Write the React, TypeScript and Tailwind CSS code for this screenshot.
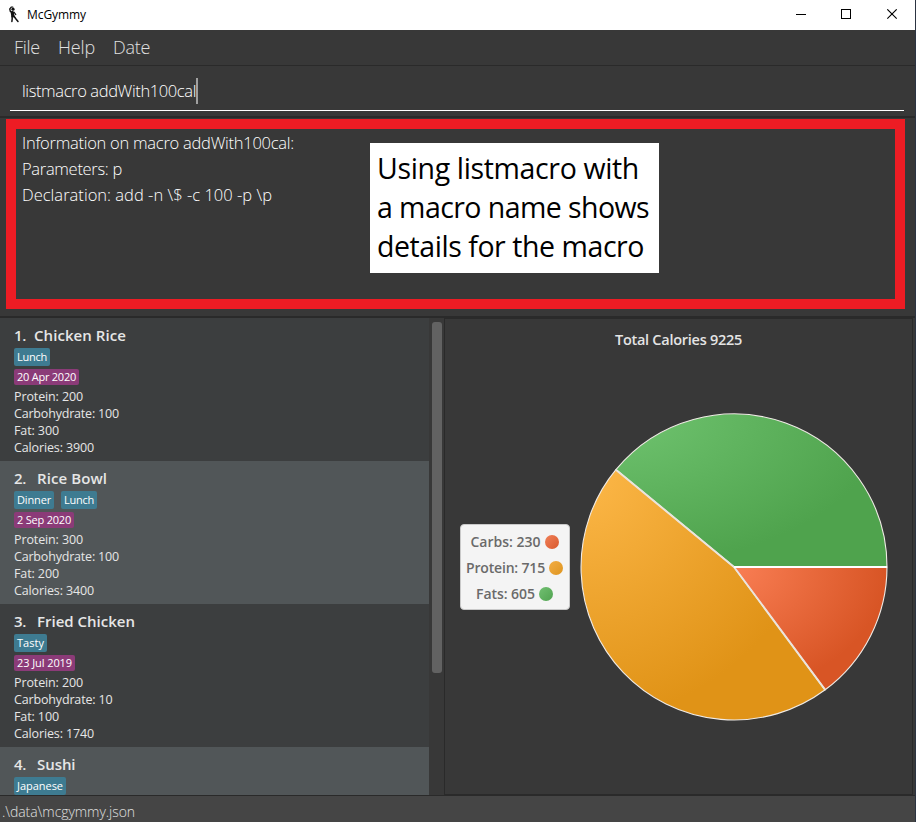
import { useLayoutEffect, useRef } from "react";

/** One line of text whose letter spacing is adjusted so that it fills `w` pixels. */
function Fit({ w, className = "", children }: { w: number; className?: string; children: string }) {
  const ref = useRef<HTMLSpanElement>(null);
  useLayoutEffect(() => {
    const el = ref.current;
    if (!el) return;
    el.style.letterSpacing = "0px";
    const natural = el.getBoundingClientRect().width;
    el.style.letterSpacing = `${(w - natural) / children.length}px`;
  }, [w, children]);
  return (
    <span ref={ref} className={`inline-block whitespace-pre ${className}`}>
      {children}
    </span>
  );
}

type Tag = { label: string; w: number };
type Food = {
  n: string;
  nw: number;
  name: string;
  w: number;
  tags: Tag[];
  date?: Tag;
  facts: Tag[];
};

const foods: Food[] = [
  {
    n: "1.", nw: 20, name: "Chicken Rice", w: 92,
    tags: [{ label: "Lunch", w: 30 }],
    date: { label: "20 Apr 2020", w: 59 },
    facts: [
      { label: "Protein: 200", w: 69 },
      { label: "Carbohydrate: 100", w: 105 },
      { label: "Fat: 300", w: 45 },
      { label: "Calories: 3900", w: 80 },
    ],
  },
  {
    n: "2.", nw: 23, name: "Rice Bowl", w: 70,
    tags: [{ label: "Dinner", w: 34 }, { label: "Lunch", w: 30 }],
    date: { label: "2 Sep 2020", w: 54 },
    facts: [
      { label: "Protein: 300", w: 69 },
      { label: "Carbohydrate: 100", w: 105 },
      { label: "Fat: 200", w: 45 },
      { label: "Calories: 3400", w: 80 },
    ],
  },
  {
    n: "3.", nw: 23, name: "Fried Chicken", w: 98,
    tags: [{ label: "Tasty", w: 27 }],
    date: { label: "23 Jul 2019", w: 55 },
    facts: [
      { label: "Protein: 200", w: 69 },
      { label: "Carbohydrate: 10", w: 98.5 },
      { label: "Fat: 100", w: 45 },
      { label: "Calories: 1740", w: 80 },
    ],
  },
  {
    n: "4.", nw: 23, name: "Sushi", w: 38.5,
    tags: [{ label: "Japanese", w: 46 }],
    facts: [],
  },
];

function FoodCard({ food, alt }: { food: Food; alt: boolean }) {
  return (
    <div className={`h-[143px] shrink-0 pl-3.5 pt-[7px] text-[#e6e6e6] ${alt ? "bg-[#515658]" : "bg-[#3c3e3f]"}`}>
      <div className="flex h-[21px] text-[15px] leading-[21px] font-semibold">
        <div className="shrink-0" style={{ width: food.nw }}>
          <Fit w={12}>{food.n}</Fit>
        </div>
        <Fit w={food.w}>{food.name}</Fit>
      </div>
      <div className="mt-0.5 flex gap-[7px]">
        {food.tags.map((t) => (
          <div key={t.label} className="h-[18px] rounded-[2px] bg-[#3e7b91] px-[3px] text-[11px] leading-[18px] text-white">
            <Fit w={t.w}>{t.label}</Fit>
          </div>
        ))}
      </div>
      {food.date && (
        <div className="mt-[3px] h-4 w-fit rounded-[2px] bg-[#8b3b78] px-[3px] text-[11px] leading-4 text-white">
          <Fit w={food.date.w} className="h-4">{food.date.label}</Fit>
        </div>
      )}
      <div className="mt-[3px] flex flex-col text-[12.5px] leading-[17px]">
        {food.facts.map((f) => (
          <div key={f.label} className="h-[17px]">
            <Fit w={f.w}>{f.label}</Fit>
          </div>
        ))}
      </div>
    </div>
  );
}

const legend = [
  { label: "Carbs: 230", w: 70, dot: "bg-linear-to-br from-[#f08058] to-[#d9582b]" },
  { label: "Protein: 715", w: 79, dot: "bg-linear-to-br from-[#f3ad43] to-[#de951d]" },
  { label: "Fats: 605", w: 59, dot: "bg-linear-to-br from-[#72c072] to-[#50a350]" },
];

function Pie() {
  return (
    <svg width="308" height="308" viewBox="-154 -154 308 308" stroke="#f0ebe6" strokeLinejoin="round">
      <defs>
        <radialGradient id="fats" cx="0" cy="0" r="1">
          <stop offset="0" stopColor="#70c470" />
          <stop offset="1" stopColor="#4fa34d" />
        </radialGradient>
        <radialGradient id="protein" cx="0" cy="0" r="1">
          <stop offset="0" stopColor="#fdb849" />
          <stop offset="1" stopColor="#e09317" />
        </radialGradient>
        <radialGradient id="carbs" cx="0" cy="0" r="1">
          <stop offset="0" stopColor="#f97e54" />
          <stop offset="1" stopColor="#d85525" />
        </radialGradient>
      </defs>
      <g strokeWidth="1.1">
        <path d="M0 0H153A153 153 0 0 0 -118.1 -97.3Z" fill="url(#fats)" />
        <path d="M0 0L-118.1 -97.3A153 153 0 0 0 91.2 122.8Z" fill="url(#protein)" />
        <path d="M0 0L91.2 122.8A153 153 0 0 0 153 0Z" fill="url(#carbs)" />
      </g>
      <path d="M-118.1 -97.3L0 0L91.2 122.8" fill="none" stroke="#ebe4dc" strokeWidth="2" />
      <path d="M0 0H153" stroke="#fff" strokeWidth="2" />
    </svg>
  );
}

export default function App() {
  return (
    <div className="flex h-[822px] w-[917px] overflow-hidden bg-white font-['Open_Sans','Noto_Sans',sans-serif]">
      <div className="flex w-[915px] shrink-0 flex-col bg-[#383838]">
        <div className="flex h-[30px] shrink-0 items-center bg-white text-black">
          <svg className="ml-[7px]" width="14" height="18" viewBox="0 0 14 18" fill="none" stroke="#111" strokeLinecap="round" strokeLinejoin="round">
            <circle cx="6" cy="3.2" r="1.6" fill="#111" stroke="none" />
            <path d="M3 2.7L4.2 1.1L5.8 1" strokeWidth="1.2" />
            <path d="M2.8 3.2L3.4 5.6L6 6.6" strokeWidth="1.4" />
            <path d="M5.3 6.6L5.9 10" strokeWidth="3.2" />
            <path d="M7 6.2L8.8 8.6" strokeWidth="1.1" />
            <path d="M5 10L5.2 12.5L4.9 15.5" strokeWidth="1.5" />
            <path d="M6.8 10L8.8 12.8L11 15.5" strokeWidth="1.5" />
          </svg>
          <Fit w={59} className="ml-1.5 text-[12px]">McGymmy</Fit>
          <svg className="ml-auto mr-4" width="104" height="12" viewBox="0 0 104 12" fill="none" stroke="#000" shapeRendering="crispEdges">
            <path d="M1 5.5H11" />
            <rect x="46.5" y="0.5" width="9" height="9" />
            <path d="M92.3 0.3L101.7 9.7M101.7 0.3L92.3 9.7" shapeRendering="auto" strokeWidth="1.1" />
          </svg>
        </div>

        <div className="flex h-9 shrink-0 border-b border-[#2a2a2a] pl-3.5 text-[18px] leading-[35px] font-light text-[#e0e0e0]">
          <Fit w={26} className="mr-[18px]">File</Fit>
          <Fit w={37} className="mr-[18px]">Help</Fit>
          <Fit w={37}>Date</Fit>
        </div>

        <div className="h-[52px] shrink-0 border-b-2 border-[#2a2a2a] pt-2.5 pl-2.5">
          <div className="flex h-[35px] w-[894px] border-b border-white pl-3 text-[16.5px] leading-[30px] font-light text-white">
            <Fit w={174}>listmacro addWith100cal</Fit>
            <div className="mt-0.5 h-[26px] w-0.5 bg-[#a0a0a0]" />
          </div>
        </div>

        <div className="h-[200px] shrink-0 border-b-2 border-[#2a2a2a] pt-px pl-1.5">
          <div className="flex h-[190px] w-[899px] border-10 border-[#ed1c24] pl-1.5">
            <div className="flex w-[348px] shrink-0 flex-col pt-px text-[16.5px] leading-[26px] font-light text-white">
              <Fit w={272} className="self-start">Information on macro addWith100cal:</Fit>
              <Fit w={100} className="self-start">Parameters: p</Fit>
              <Fit w={250} className="self-start">{"Declaration: add -n \\$ -c 100 -p \\p"}</Fit>
            </div>
            <div className="mt-3.5 flex h-[130px] w-[289px] flex-col bg-white pt-1.5 pl-[7px] text-[28.5px] leading-[39px] text-black">
              <Fit w={262} className="self-start">Using listmacro with</Fit>
              <Fit w={272} className="self-start">a macro name shows</Fit>
              <Fit w={267} className="self-start">details for the macro</Fit>
            </div>
          </div>
        </div>

        <div className="flex h-[477px] shrink-0">
          <div className="flex w-[429px] shrink-0 flex-col overflow-hidden">
            {foods.map((f, i) => (
              <FoodCard key={f.n} food={f} alt={i % 2 === 1} />
            ))}
          </div>
          <div className="w-[15px] shrink-0 pt-1 pl-[3px]">
            <div className="h-[351px] w-2.5 rounded-[3px] bg-[#626262]" />
          </div>
          <div className="flex h-[477px] w-[469px] shrink-0 flex-col border border-[#2a2a2a] pt-px">
            <div className="flex h-10 items-center pl-[170px] text-[14.5px] font-semibold text-[#e4e4e4]">
              <Fit w={127}>Total Calories 9225</Fit>
            </div>
            <div className="mt-[53px] flex items-center pl-[15px]">
              <div className="mr-[9.5px] flex h-[86px] w-[110px] flex-col items-center rounded-[4px] border border-[#c9c9c9] bg-[#f4f4f4] pt-1 pr-px text-[14px] leading-[26px] font-semibold text-[#6a6a6a]">
                {legend.map((l) => (
                  <div key={l.label} className="flex h-[26px] items-center gap-1">
                    <Fit w={l.w}>{l.label}</Fit>
                    <div className={`size-3.5 rounded-full ${l.dot}`} />
                  </div>
                ))}
              </div>
              <Pie />
            </div>
          </div>
        </div>

        <div className="h-[27px] shrink-0 border-t border-[#2a2a2a] bg-[#454545] pt-1.5 pl-0.5 text-[14px] leading-5 font-light text-[#e0e0e0]">
          <Fit w={133}>{".\\data\\mcgymmy.json"}</Fit>
        </div>
      </div>
      <div className="w-px shrink-0 bg-[#2c3442]" />
    </div>
  );
}
